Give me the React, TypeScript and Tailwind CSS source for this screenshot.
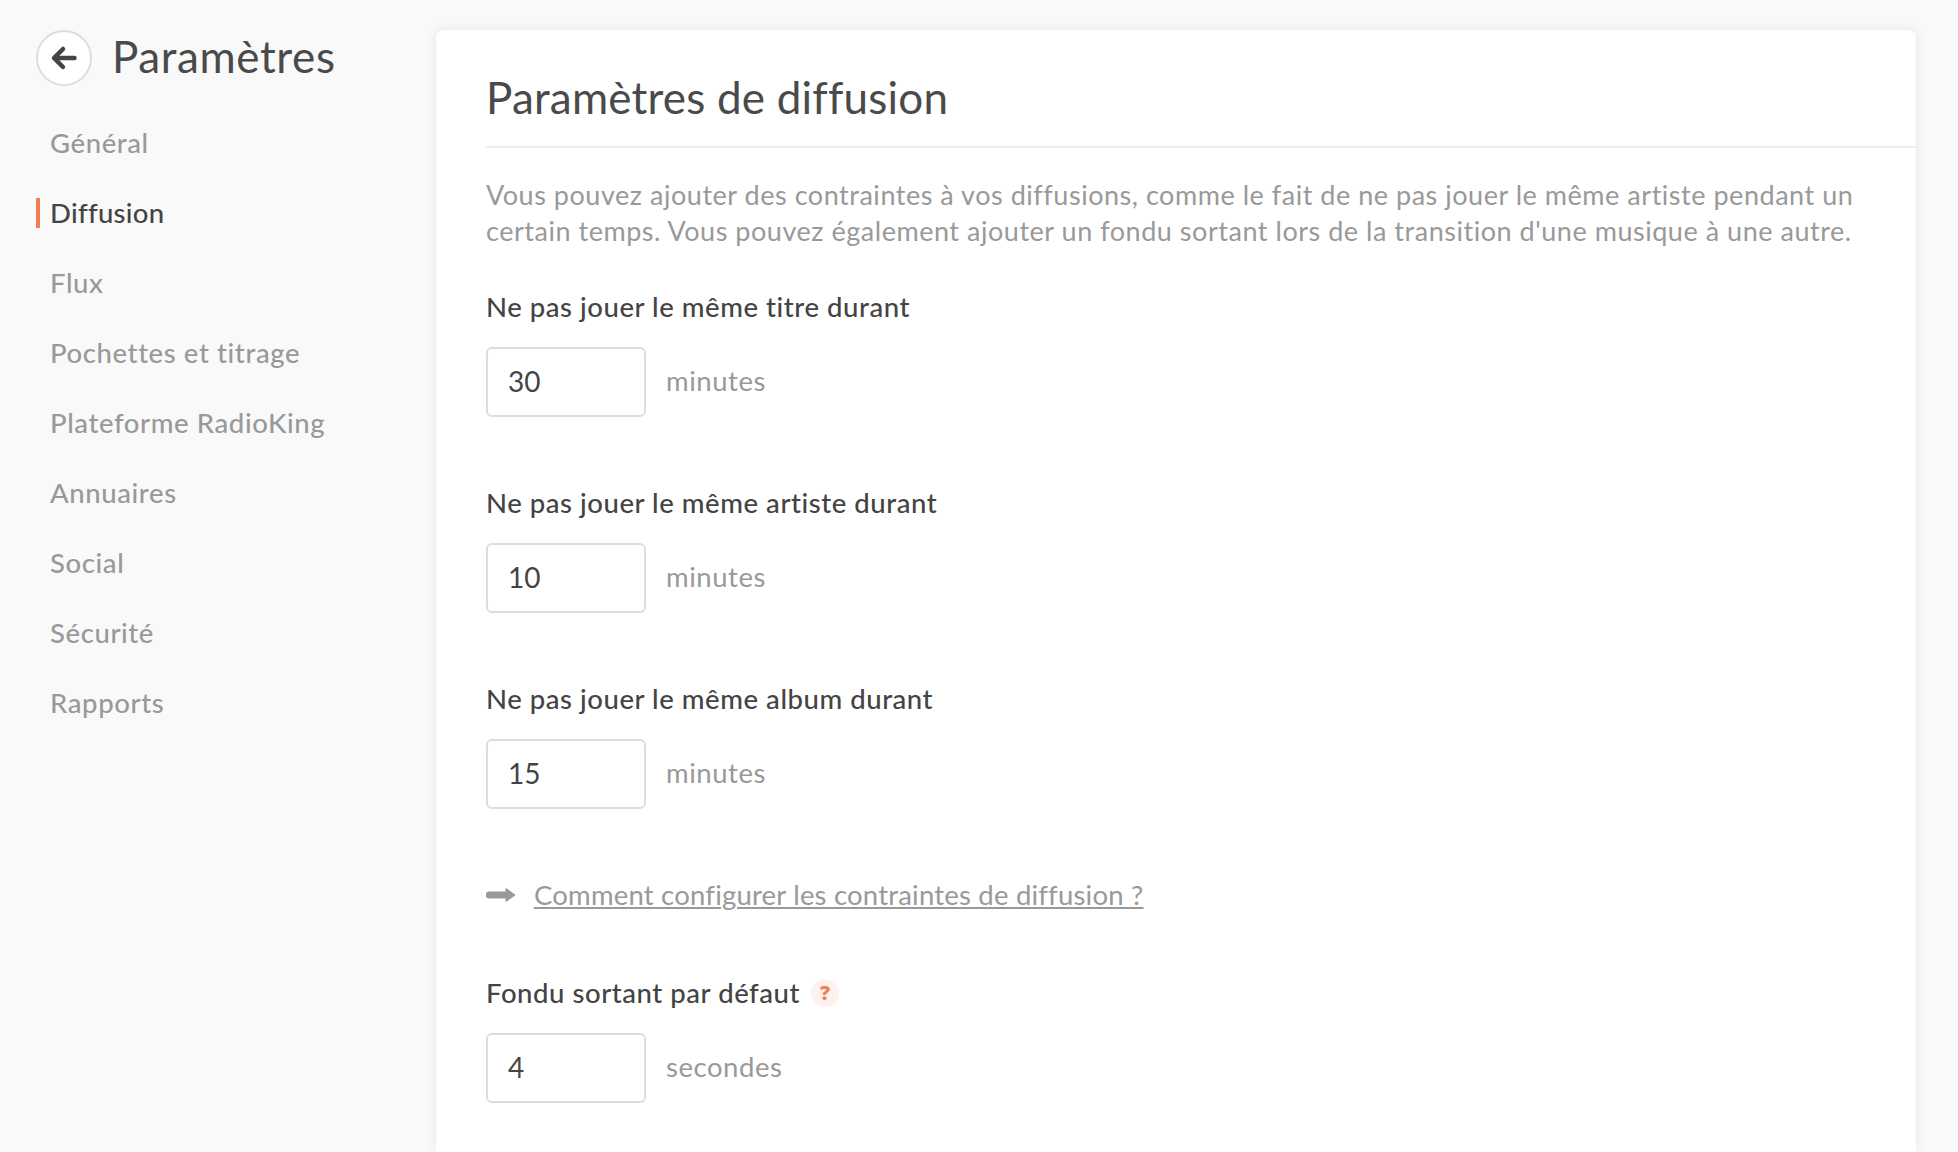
import React from "react";

const nav = ["Général", "Diffusion", "Flux", "Pochettes et titrage", "Plateforme RadioKing", "Annuaires", "Social", "Sécurité", "Rapports"];

function Field({ label, value, unit, help }: { label: string; value: string; unit: string; help?: boolean }) {
  return (
    <div>
      <div className="flex items-center h-[36px] text-[27.5px] tracking-[0.55px] font-medium text-[#444444]">
        <span>{label}</span>
        {help && (
          <span className="ml-[11px] w-[28px] h-[28px] rounded-full bg-[#fdf2ed] flex items-center justify-center text-[#f07f56] text-[20px] font-['Open_Sans',sans-serif] font-extrabold tracking-normal">?</span>
        )}
      </div>
      <div className="mt-[22px] flex items-center">
        <div className="w-[160px] h-[70px] rounded-[6px] border-2 border-[#dddddd] bg-white pl-[20px] pb-[2px] flex items-center text-[28px] text-[#444444]">{value}</div>
        <span className="ml-[20px] pb-[2px] text-[27.5px] tracking-[0.55px] text-[#999999]">{unit}</span>
      </div>
    </div>
  );
}

export default function App() {
  return (
    <div className="flex h-[1152px] overflow-hidden bg-[#f9f9f9] font-['Lato',sans-serif]">
      <aside className="w-[436px] shrink-0 pl-[36px] pt-[30px]">
        <div className="flex items-center h-[56px]">
          <button className="w-[56px] h-[56px] rounded-full border-2 border-[#dddddd] bg-white flex items-center justify-center text-[#444444]">
            <svg width="28" height="28" viewBox="0 0 28 28" fill="none" stroke="currentColor" strokeWidth="4.500" strokeLinecap="round" strokeLinejoin="round">
              <path d="M24.500 14H5M13 5 4 14l9 9" />
            </svg>
          </button>
          <h1 className="ml-[20px] pb-[4px] text-[44px] tracking-[0.6px] font-normal text-[#4a4a4a]">Paramètres</h1>
        </div>
        <nav className="mt-[22px]">
          {nav.map((n) => (
            <div key={n} className="h-[70px] flex items-center">
              <span className={n === "Diffusion" ? "w-[4px] h-[30px] bg-[#f07f56]" : "w-[4px] h-[30px]"} />
              <span className={n === "Diffusion" ? "ml-[10px] text-[27.5px] tracking-[0.3px] font-medium text-[#444444]" : "ml-[10px] text-[27.5px] tracking-[0.6px] font-medium text-[#999999]"}>{n}</span>
            </div>
          ))}
        </nav>
      </aside>
      <main className="flex-1 mr-[42px] mt-[30px] rounded-t-[8px] bg-white shadow-[0_0_12px_rgba(0,0,0,0.08)] pl-[50px]">
        <h2 className="h-[118px] flex items-center pt-[18px] text-[44px] tracking-[0.2px] font-normal text-[#4a4a4a] border-b-2 border-[#eeeeee]">Paramètres de diffusion</h2>
        <p className="mt-[29px] pr-[40px] text-[27px] tracking-[0.53px] leading-[36px] text-[#999999]">
          Vous pouvez ajouter des contraintes à vos diffusions, comme le fait de ne pas jouer le même artiste pendant un certain temps. Vous pouvez également ajouter un fondu sortant lors de la transition d'une musique à une autre.
        </p>
        <div className="mt-[40px] flex flex-col gap-[68px]">
          <Field label="Ne pas jouer le même titre durant" value="30" unit="minutes" />
          <Field label="Ne pas jouer le même artiste durant" value="10" unit="minutes" />
          <Field label="Ne pas jouer le même album durant" value="15" unit="minutes" />
        </div>
        <div className="mt-[68px] flex items-center h-[36px] text-[27.5px] tracking-[0.2px] text-[#999999]">
          <svg width="30" height="16" viewBox="0 0 30 16" fill="#999999" stroke="#999999" strokeWidth="1" strokeLinejoin="round">
            <path d="M3 5h17V1.500l9 6.500-9 6.500V11H3a3 3 0 0 1 0-6z" />
          </svg>
          <a className="ml-[18px] underline">Comment configurer les contraintes de diffusion ?</a>
        </div>
        <div className="mt-[62px]">
          <Field label="Fondu sortant par défaut" value="4" unit="secondes" help />
        </div>
      </main>
    </div>
  );
}
